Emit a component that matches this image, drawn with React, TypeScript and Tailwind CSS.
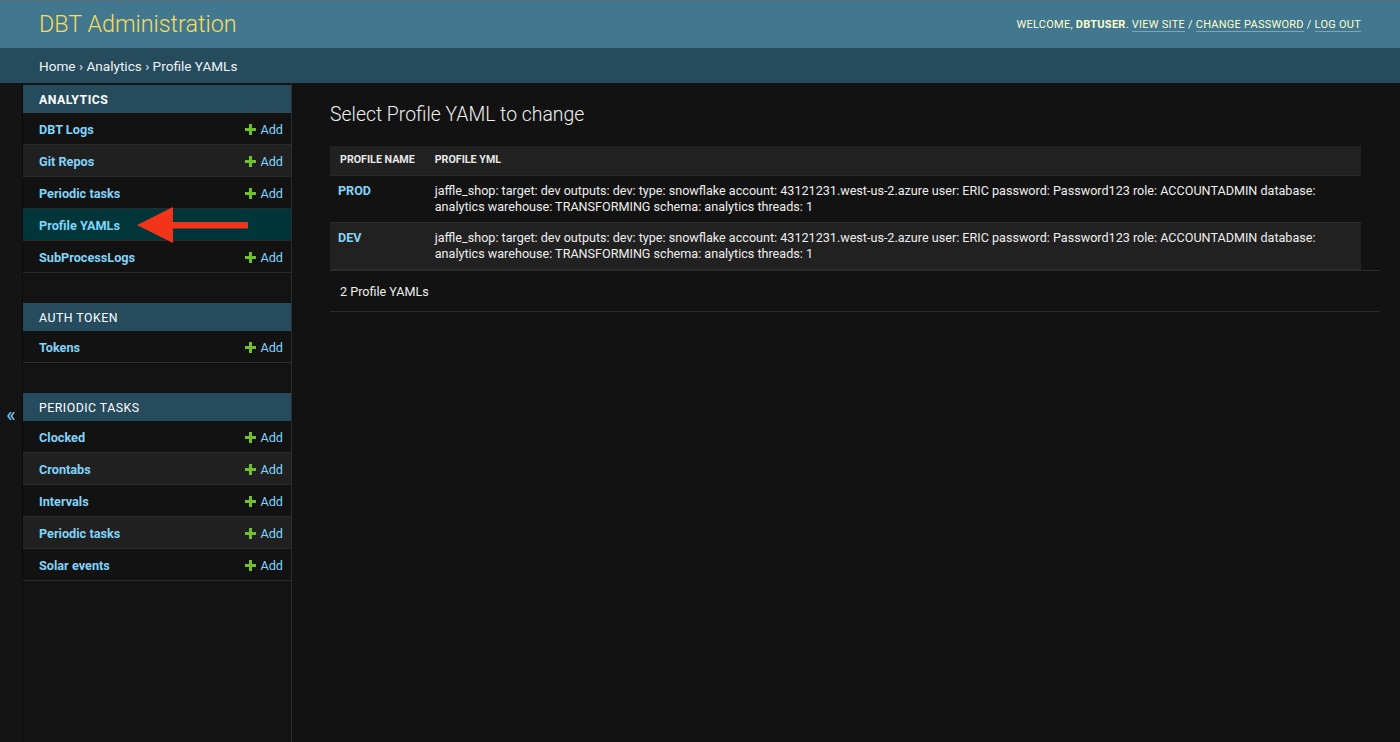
import React from 'react';

const font = { fontFamily: 'Roboto, "Liberation Sans", sans-serif' };

type Model = { name: string; add?: boolean; selected?: boolean };
type AppModule = { title: string; current?: boolean; models: Model[] };

const modules: AppModule[] = [
  {
    title: 'Analytics',
    current: true,
    models: [
      { name: 'DBT Logs', add: true },
      { name: 'Git Repos', add: true },
      { name: 'Periodic tasks', add: true },
      { name: 'Profile YAMLs', selected: true },
      { name: 'SubProcessLogs', add: true },
    ],
  },
  { title: 'Auth Token', models: [{ name: 'Tokens', add: true }] },
  {
    title: 'Periodic Tasks',
    models: [
      { name: 'Clocked', add: true },
      { name: 'Crontabs', add: true },
      { name: 'Intervals', add: true },
      { name: 'Periodic tasks', add: true },
      { name: 'Solar events', add: true },
    ],
  },
];

const yml =
  'jaffle_shop: target: dev outputs: dev: type: snowflake account: 43121231.west-us-2.azure user: ERIC password: Password123 role: ACCOUNTADMIN database: analytics warehouse: TRANSFORMING schema: analytics threads: 1';

const profiles = [
  { name: 'PROD', yml },
  { name: 'DEV', yml },
];

const PlusIcon = () => (
  <svg width="11" height="11" viewBox="0 0 11 11" className="mr-[4px]">
    <path d="M4 0h3v4h4v3H7v4H4V7H0V4h4z" fill="#70bf2b" />
  </svg>
);

const Sidebar: React.FC = () => (
  <nav className="relative w-[269px] shrink-0 border-r border-[#2c2c2c] bg-[#131313] pt-[2px]">
    {modules.map((m) => (
      <div key={m.title} className="mb-[30px]">
        <div
          className={`flex h-[28px] items-center bg-[#264b5d] px-[16px] pt-[2px] text-[12.3px] uppercase tracking-[0.5px] text-white ${
            m.current ? 'font-bold' : 'font-normal'
          }`}
        >
          {m.title}
        </div>
        {m.models.map((row, i) => (
          <div
            key={row.name}
            className={`flex h-[32px] items-center justify-between border-b border-[#2a2a2a] pl-[16px] pr-[8px] text-[12.7px] ${
              row.selected ? 'bg-[#00363a]' : i % 2 === 1 ? 'bg-[#202020]' : 'bg-[#121212]'
            }`}
          >
            <span className="pt-[3px] font-bold text-[#81d4fa]">{row.name}</span>
            {row.add && (
              <span className="flex items-center pt-[2px] text-[#81d4fa]">
                <PlusIcon />
                Add
              </span>
            )}
          </div>
        ))}
      </div>
    ))}

    {/* arrow pointing at the selected model */}
    <svg className="absolute left-[114px] top-[122px]" width="115" height="40" viewBox="0 0 115 40">
      <polygon points="0,20 36,2 36,38" fill="#f2341b" />
      <rect x="34" y="17" width="77" height="6.5" fill="#f2341b" />
    </svg>
  </nav>
);

const App: React.FC = () => {
  return (
    <div className="flex min-h-[742px] flex-col bg-[#121212] text-[#eeeeee]" style={font}>
      {/* header */}
      <header className="flex h-[48px] items-center justify-between border-t border-[#5b6b74] bg-[#427790] px-[39px]">
        <h1 className="text-[23.3px] font-light text-[#f5dd5d]">DBT Administration</h1>
        <div className="pt-[2px] text-[11px] uppercase tracking-[0.25px] text-[#ffffcc]">
          Welcome, <strong className="font-bold">dbtuser</strong>.{' '}
          <a className="border-b border-[#ffffff55]">View site</a> /{' '}
          <a className="border-b border-[#ffffff55]">Change password</a> /{' '}
          <a className="border-b border-[#ffffff55]">Log out</a>
        </div>
      </header>

      {/* breadcrumbs */}
      <div className="flex h-[35px] items-center bg-[#264b5d] px-[39px] pt-[1px] text-[13.6px] text-[#eef3f6]">
        Home › Analytics › Profile YAMLs
      </div>

      <div className="flex flex-1">
        {/* sidebar toggle */}
        <div className="flex w-[23px] shrink-0 items-center justify-center border-r border-[#0b0b0b] bg-[#141414] pt-[4px]">
          <span className="text-[20px] leading-none text-[#81d4fa]">«</span>
        </div>

        <Sidebar />

        {/* main content */}
        <main className="flex-1 pl-[38px] pr-[20px] pt-[20px]">
          <h1 className="mb-[19px] text-[19.4px] font-light leading-[24px] text-[#f0f0f0]">
            Select Profile YAML to change
          </h1>

          <table className="w-[1031px] border-collapse text-[12.6px]">
            <thead>
              <tr className="bg-[#212121]">
                <th className="h-[29px] w-[93px] whitespace-nowrap border-b border-[#2a2a2a] px-[10px] text-left text-[10.7px] font-bold uppercase text-[#e8e8e8]">
                  Profile name
                </th>
                <th className="whitespace-nowrap border-b border-[#2a2a2a] px-[10px] text-left text-[10.7px] font-bold uppercase text-[#e8e8e8]">
                  Profile yml
                </th>
              </tr>
            </thead>
            <tbody>
              {profiles.map((p, i) => (
                <tr key={p.name} className={i % 2 === 1 ? 'bg-[#212121]' : 'bg-[#121212]'}>
                  <td className="border-b border-[#2a2a2a] pb-[7px] pl-[8px] pt-[7px] align-top font-bold leading-[16px] text-[#81d4fa]">
                    {p.name}
                  </td>
                  <td className="border-b border-[#2a2a2a] pb-[7px] pl-[10px] pr-[8px] pt-[7px] align-top leading-[16px] text-[#eeeeee]">
                    {p.yml}
                  </td>
                </tr>
              ))}
            </tbody>
          </table>

          <div className="flex h-[42px] items-center border-b border-t border-[#2a2a2a] pl-[10px] pt-[3px] text-[12.6px] text-[#eeeeee]">
            2 Profile YAMLs
          </div>
        </main>
      </div>
    </div>
  );
};

export default App;
